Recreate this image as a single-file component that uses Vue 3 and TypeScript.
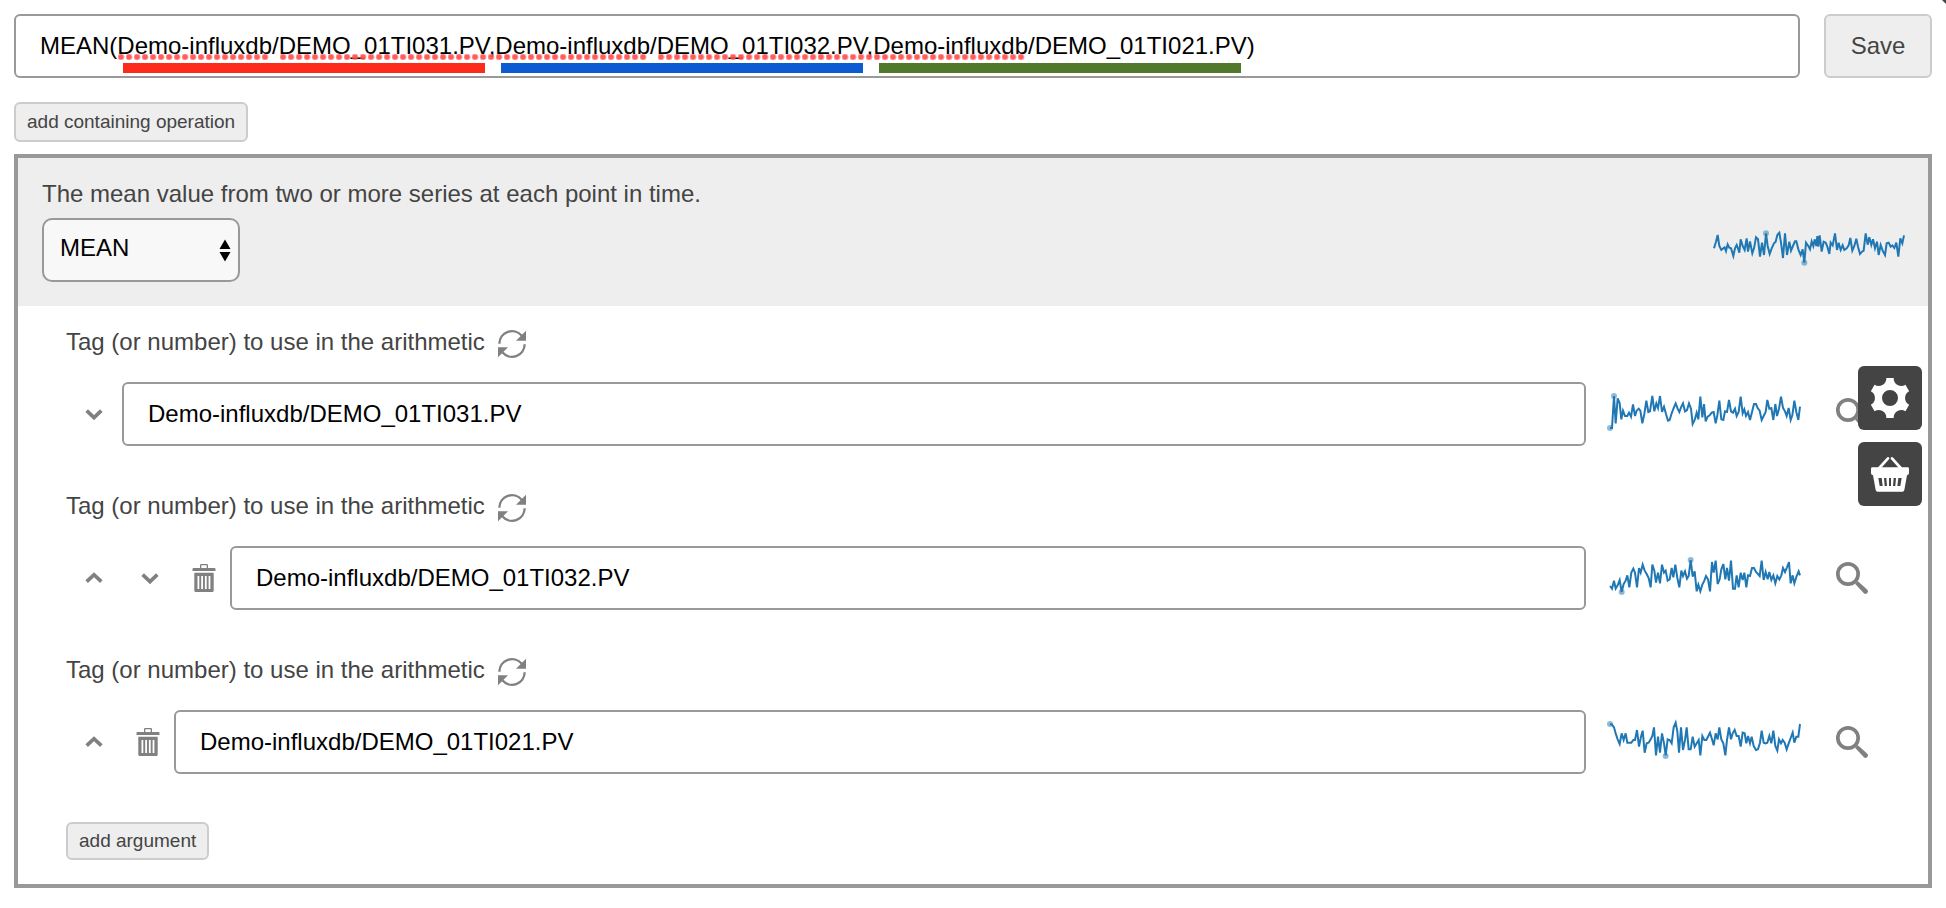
<script setup lang="ts">
import { ref } from 'vue'

interface Spark {
  view: string
  points: string
  marks: [number, number][]
}

interface Argument {
  value: string
  up: boolean
  down: boolean
  removable: boolean
  spark: Spark
}

const formula = ref(
  'MEAN(Demo-influxdb/DEMO_01TI031.PV,Demo-influxdb/DEMO_01TI032.PV,Demo-influxdb/DEMO_01TI021.PV)'
)
const operation = ref('MEAN')

const result: Spark = {
  view: '84 678 600 144',
  points:
    '102,745 108,725 113,705 118,738 124,750 130,745 134,742 138,753 143,733 148,743 153,745 160,768 165,745 170,735 174,745 178,758 182,718 188,738 194,750 200,715 204,755 210,724 217,760 222,745 228,712 234,718 240,770 246,728 252,765 258,700 263,738 269,762 275,745 282,730 287,725 292,705 298,698 303,728 309,774 315,700 321,765 328,725 333,752 340,735 345,724 349,724 355,748 362,765 368,748 373,788 378,728 385,738 390,748 395,724 400,738 404,718 409,738 412,708 415,740 419,706 425,755 431,725 437,728 442,740 448,762 452,728 458,736 465,700 471,750 476,728 482,750 488,736 493,750 500,745 506,736 511,714 517,752 523,738 529,716 534,740 540,762 546,755 551,752 557,700 563,734 568,712 574,735 579,718 585,745 591,725 596,765 602,735 608,752 615,765 620,730 626,728 632,740 637,736 643,744 649,728 655,770 661,715 667,730 672,706',
  marks: [[258, 700], [373, 788]]
}

const args = ref<Argument[]>([
  {
    value: 'Demo-influxdb/DEMO_01TI031.PV',
    up: false,
    down: true,
    removable: false,
    spark: {
      view: '72 150 600 144',
      points:
        '90,264 96,264 102,168 107,250 113,175 119,190 124,238 129,212 135,228 142,228 147,218 153,230 159,193 165,228 170,212 176,206 181,212 187,250 193,222 199,182 205,216 210,214 217,168 223,214 229,190 234,204 240,168 246,216 252,200 258,222 264,242 269,240 275,220 281,204 287,190 293,206 298,216 304,200 309,190 315,214 321,210 327,190 333,206 338,252 344,240 350,218 355,238 361,170 367,232 372,192 377,244 383,230 389,226 395,218 401,216 407,250 412,226 418,182 424,238 430,240 435,214 441,216 447,180 453,214 459,218 465,206 470,228 476,216 482,170 488,220 493,208 498,228 504,216 510,240 516,216 522,192 528,192 533,204 539,212 545,240 551,228 557,216 562,180 568,206 574,204 580,240 586,192 591,228 597,206 603,170 609,204 615,214 620,228 626,204 632,240 637,226 643,182 649,216 655,240 660,200',
      marks: [[90, 264], [102, 168]]
    }
  },
  {
    value: 'Demo-influxdb/DEMO_01TI032.PV',
    up: true,
    down: true,
    removable: true,
    spark: {
      view: '72 72 600 144',
      points:
        '90,168 96,176 102,152 107,176 113,166 119,150 125,186 131,162 137,152 142,136 148,172 154,128 160,116 165,128 171,172 177,114 182,128 188,104 194,122 200,132 206,144 212,172 217,104 223,122 228,158 234,128 240,160 246,104 252,128 257,122 263,152 269,148 275,114 280,142 286,104 292,144 298,172 304,122 309,138 315,124 321,146 326,138 332,90 338,140 344,124 350,184 355,164 361,184 367,164 373,152 378,138 384,148 390,184 396,96 401,128 407,92 413,162 419,148 424,118 430,102 436,148 441,114 447,152 453,92 459,176 465,176 470,136 476,172 482,128 488,150 493,128 499,172 504,136 510,138 516,114 522,114 528,126 534,132 539,138 545,92 551,150 557,126 563,148 568,126 574,150 580,136 586,160 592,138 598,148 604,136 609,114 615,126 621,112 627,96 632,160 638,136 643,160 650,138 656,124 660,136',
      marks: [[125, 186], [332, 90]]
    }
  },
  {
    value: 'Demo-influxdb/DEMO_01TI021.PV',
    up: true,
    down: false,
    removable: true,
    spark: {
      view: '72 84 600 144',
      points:
        '90,102 96,104 102,112 107,130 113,148 119,162 125,130 131,150 137,130 142,158 148,158 154,158 160,150 165,150 171,120 177,170 183,140 188,122 194,188 200,160 206,158 212,148 217,138 222,112 228,196 234,140 240,188 246,130 252,160 257,196 263,148 269,150 275,160 281,112 287,98 292,124 297,188 303,112 309,180 315,150 320,112 326,178 332,178 338,140 344,170 350,160 356,150 361,196 367,138 373,150 379,150 385,138 390,128 396,148 401,166 407,130 413,148 418,112 424,148 430,160 436,196 441,150 447,112 453,148 458,130 464,120 470,138 476,138 482,170 488,128 494,130 499,160 504,138 510,160 515,140 521,168 528,180 534,178 540,158 545,122 551,158 557,160 562,158 568,138 574,160 580,122 586,168 592,182 597,148 603,160 608,150 614,158 620,178 626,160 632,144 638,128 643,158 649,140 655,140 660,102',
      marks: [[90, 102], [257, 198]]
    }
  }
])
</script>

<template>
  <main class="page">
    <div class="formula-bar">
      <div class="formula">
        <input v-model="formula" class="field" type="text" aria-label="Formula" spellcheck="false" />
        <div class="spelling" aria-hidden="true">
          <span class="dots dots-short"></span>
          <span class="dots dots-long"></span>
          <span class="dots dots-long"></span>
        </div>
        <div class="ranges" aria-hidden="true">
          <span class="range red"></span>
          <span class="range blue"></span>
          <span class="range green"></span>
        </div>
      </div>
      <button class="btn save" type="button">Save</button>
    </div>

    <button class="btn small" type="button">add containing operation</button>

    <section class="panel">
      <header class="head">
        <div class="operation">
          <label for="operation">The mean value from two or more series at each point in time.</label>
          <div class="picker">
            <select id="operation" v-model="operation">
              <option>MEAN</option>
            </select>
            <svg class="arrows" viewBox="0 0 12 24" aria-hidden="true">
              <path d="M6 1.500 11.500 11H.5zM6 23.500 11.500 14H.5z" />
            </svg>
          </div>
        </div>
        <svg class="spark" :viewBox="result.view" role="img" aria-label="Result trend">
          <polyline :points="result.points" />
          <circle v-for="m in result.marks" :key="m[0]" :cx="m[0]" :cy="m[1]" r="9" />
        </svg>
      </header>

      <div class="body">
        <div v-for="(arg, i) in args" :key="i" class="argument">
          <div class="caption">
            <label :for="'arg-' + i">Tag (or number) to use in the arithmetic</label>
            <button class="icon refresh" type="button" aria-label="Refresh">
              <svg viewBox="54 54 84 90">
                <path class="line" d="M58 101A38 38 0 0 1 125 77M134 103A38 38 0 0 1 67 127" />
                <path d="M138 62V92H108zM54 142V112H84z" />
              </svg>
            </button>
          </div>
          <div class="row">
            <button v-if="arg.up" class="icon move" type="button" aria-label="Move up">
              <svg viewBox="0 0 54 36"><path class="stroke" d="M5 29 27 8 49 29" /></svg>
            </button>
            <button v-if="arg.down" class="icon move" type="button" aria-label="Move down">
              <svg viewBox="0 0 54 36"><path class="stroke" d="M5 8 27 29 49 8" /></svg>
            </button>
            <button v-if="arg.removable" class="icon trash" type="button" aria-label="Remove">
              <svg viewBox="0 0 24 28">
                <path
                  fill-rule="evenodd"
                  d="M8 4V1.200Q8 0 9.200 0H14.800Q16 0 16 1.200V4H22.500Q23.500 4 23.500 5V7H.5V5Q.5 4 1.500 4zM9.300 4H14.700V1.300H9.300zM2.300 8.800H21.700V26.500Q21.700 28 20.200 28H3.800Q2.300 28 2.300 26.500zM5.500 12V25H7.300V12zM9.200 12V25H11V12zM12.900 12V25H14.700V12zM16.600 12V25H18.400V12z"
                />
              </svg>
            </button>
            <input :id="'arg-' + i" v-model="arg.value" class="field" type="text" spellcheck="false" />
            <svg class="spark" :viewBox="arg.spark.view" role="img" aria-label="Tag trend">
              <polyline :points="arg.spark.points" />
              <circle v-for="m in arg.spark.marks" :key="m[0]" :cx="m[0]" :cy="m[1]" r="9" />
            </svg>
            <button class="icon search" type="button" aria-label="Search tags">
              <svg viewBox="0 0 96 96">
                <circle class="ring" cx="36" cy="36" r="30.500" />
                <path d="M57 65 65 57 94 83Q98 89 93 94 88 98 83 93z" />
              </svg>
            </button>
          </div>
        </div>
        <button class="btn small add" type="button">add argument</button>
      </div>
    </section>

    <nav class="tools" aria-label="Tools">
      <button class="tool" type="button" aria-label="Settings">
        <svg viewBox="-60 -60 120 120">
          <path
            fill-rule="evenodd"
            d="M-11-60H11A23 23 0 0 0 46.400-39.600L57.500-20.400A23 23 0 0 0 57.500 20.400L46.400 39.600A23 23 0 0 0 11 60H-11A23 23 0 0 0-46.400 39.600L-57.500 20.400A23 23 0 0 0-57.500-20.400L-46.400-39.600A23 23 0 0 0-11-60zM24 0A24 24 0 1 0-24 0 24 24 0 1 0 24 0z"
          />
        </svg>
      </button>
      <button class="tool" type="button" aria-label="Basket">
        <svg viewBox="60 282 120 120">
          <path class="handle" d="M88 324 114 295M152 324 126 295" />
          <path
            fill-rule="evenodd"
            d="M67 322H173Q177 322 177 326V340Q177 345 171 346L163 390Q162 395 157 395H83Q78 395 77 390L69 346Q63 345 63 340V326Q63 322 67 322zM85 354 89 378H98L95 354zM102 354 104 378H111L109 354zM117 354V378H123V354zM131 354 129 378H136L138 354zM145 354 142 378H151L155 354z"
          />
        </svg>
      </button>
    </nav>
    <div class="corner" aria-hidden="true"></div>
  </main>
</template>

<style>
body {
  margin: 0;
  background: #fff;
}
</style>

<style scoped>
.page {
  padding: 14px;
  color: #444;
  font: 24px/28px "Liberation Sans", Arial, sans-serif;
}

button,
input,
select {
  margin: 0;
  font: inherit;
  box-sizing: border-box;
}

button {
  cursor: pointer;
}

.formula-bar {
  display: flex;
  gap: 24px;
  margin-bottom: 24px;
}

.formula {
  position: relative;
  flex: 1;
  display: flex;
  min-width: 0;
}

.field {
  flex: 1;
  min-width: 0;
  height: 64px;
  padding: 0 24px;
  border: 2px solid #999;
  border-radius: 6px;
  background: #fff;
  color: #000;
}

.spelling,
.ranges {
  position: absolute;
  display: flex;
  pointer-events: none;
}

.spelling {
  left: 104px;
  top: 40px;
  gap: 10px;
}

.dots {
  height: 6px;
  background: radial-gradient(circle at 3px 3px, #ff4a4ae6 2px, #ff5a5a80 3px, transparent 4px) 0 0 / 8px 6px;
}

.dots-short {
  width: 152px;
}

.dots-long {
  width: 368px;
}

.ranges {
  left: 109px;
  top: 49px;
  gap: 16px;
}

.range {
  width: 362px;
  height: 10px;
}

.red {
  background: #fc2b1c;
}

.blue {
  background: #0d5bd3;
}

.green {
  background: #50792c;
}

.btn {
  display: block;
  border: 2px solid #ccc;
  border-radius: 6px;
  background: #eee;
  color: #444;
}

.save {
  width: 108px;
  padding: 0;
}

.small {
  height: 40px;
  padding: 0 11px;
  font-size: 19px;
  line-height: 24px;
}

.add {
  align-self: flex-start;
  height: 38px;
  margin-top: 2px;
}

.panel {
  margin-top: 12px;
  border: 4px solid #999;
}

.head {
  display: flex;
  align-items: flex-end;
  justify-content: space-between;
  padding: 22px 20px 24px 24px;
  background: #eee;
}

.operation {
  display: flex;
  flex-direction: column;
  align-items: flex-start;
  gap: 10px;
}

.picker {
  position: relative;
  width: 198px;
}

.picker select {
  display: block;
  width: 100%;
  height: 64px;
  padding: 0 32px 4px 16px;
  border: 2px solid #999;
  border-radius: 10px;
  background: #f8f8f8;
  color: #000;
  appearance: none;
}

.arrows {
  position: absolute;
  right: 9px;
  top: 20px;
  width: 12px;
  height: 24px;
  fill: #000;
  pointer-events: none;
}

.spark {
  flex: none;
  width: 200px;
  height: 48px;
  margin: 8px 0;
  fill: none;
}

.spark polyline {
  stroke: #1f77b4;
  stroke-width: 6;
}

.spark circle {
  fill: #1f77b4;
  fill-opacity: 0.5;
}

.body {
  display: flex;
  flex-direction: column;
  gap: 46px;
  padding: 22px 28px 24px 48px;
}

.caption {
  display: flex;
  align-items: flex-start;
  gap: 13px;
  margin-bottom: 24px;
}

.row {
  display: flex;
  align-items: center;
}

.row .spark {
  margin: 0 0 0 18px;
}

.icon {
  display: flex;
  flex: none;
  align-items: center;
  justify-content: center;
  padding: 0;
  border: 0;
  background: none;
  fill: #808080;
}

.line,
.stroke,
.ring {
  fill: none;
  stroke: #808080;
}

.line {
  stroke-width: 7;
}

.stroke {
  stroke-width: 11;
}

.ring {
  stroke-width: 11;
}

.refresh svg {
  width: 28px;
  height: 30px;
}

.move {
  width: 56px;
  height: 56px;
}

.move svg {
  width: 18px;
  height: 12px;
}

.trash {
  width: 52px;
  height: 56px;
}

.trash svg {
  width: 24px;
  height: 28px;
}

.search {
  width: 96px;
  height: 64px;
}

.search svg {
  width: 32px;
  height: 32px;
}

.tools {
  position: fixed;
  right: 24px;
  top: 366px;
  display: flex;
  flex-direction: column;
  gap: 12px;
}

.tool {
  display: flex;
  align-items: center;
  justify-content: center;
  width: 64px;
  height: 64px;
  padding: 0;
  border: 0;
  border-radius: 6px;
  background: #444;
  fill: #fff;
}

.tool svg {
  width: 40px;
  height: 40px;
}

.handle {
  fill: none;
  stroke: #fff;
  stroke-width: 8;
  stroke-linecap: round;
}

.corner {
  position: fixed;
  right: 0;
  top: 0;
  width: 4px;
  height: 4px;
  background: #444;
  clip-path: polygon(0 0, 100% 0, 100% 100%);
}
</style>
